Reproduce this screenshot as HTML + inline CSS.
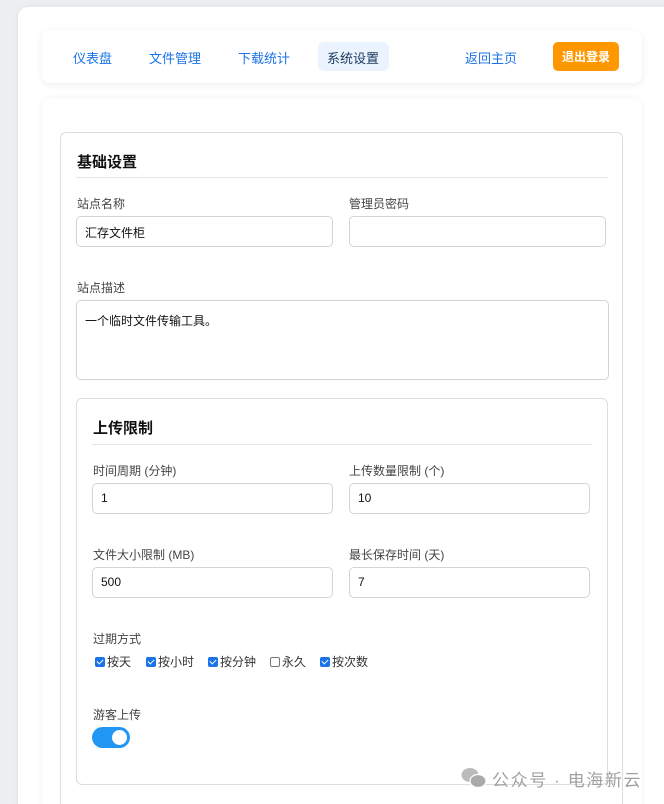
<!DOCTYPE html>
<html style="overflow:hidden;height:804px"><head><meta charset="utf-8"><style>
*{box-sizing:border-box;margin:0;padding:0}
body{width:664px;height:804px;overflow:hidden;background:#eceef2;font-family:"Liberation Sans","Noto Sans CJK SC",sans-serif;position:relative}
.a{position:absolute}
.outer{left:18px;top:7px;width:660px;height:820px;background:#fff;border-radius:10px;box-shadow:0 0 6px rgba(0,0,0,.05)}
.nav{left:42px;top:30px;width:600px;height:53px;background:#fff;border-radius:8px;box-shadow:0 2px 8px rgba(0,0,0,.07)}
.nl{font-size:13px;color:#1a73e8;top:48px}
.main{left:42px;top:98px;width:600px;height:720px;background:#fff;border-radius:8px;box-shadow:0 0 6px rgba(0,0,0,.06)}
.box{border:1px solid #ddd;border-radius:6px;background:#fff}
h3{position:absolute;font-size:15px;font-weight:bold;color:#111}
.hr{height:1px;background:#e6e6e6}
.lb{font-size:12px;color:#444}
.in{border:1px solid #d4d4d4;border-radius:5px;height:31px;font-size:12px;color:#111;padding:7px 0 0 8px;background:#fff}
.cb{display:inline-block;width:10px;height:10px;border-radius:2px;background:#1a73e8;vertical-align:-1px;margin-right:2px;position:relative}
.cb:after{content:"";position:absolute;left:3px;top:1px;width:3px;height:5px;border:solid #fff;border-width:0 1.5px 1.5px 0;transform:rotate(45deg)}
.cb.o{background:#fff;border:1px solid #777}.cb.o:after{display:none}
</style></head><body>
<div class="a outer"></div>
<div class="a nav"></div>
<div class="a nl" style="left:73px">仪表盘</div>
<div class="a nl" style="left:149px">文件管理</div>
<div class="a nl" style="left:238px">下载统计</div>
<div class="a" style="left:318px;top:42px;width:71px;height:29px;background:#eaf3fe;border-radius:6px"></div>
<div class="a nl" style="left:327px;color:#1c3a5e">系统设置</div>
<div class="a nl" style="left:465px">返回主页</div>
<div class="a" style="left:553px;top:42px;width:66px;height:29px;background:#ff9800;border-radius:5px;color:#fff;font-size:12px;font-weight:bold;text-align:center;line-height:30px">退出登录</div>
<div class="a main"></div>
<div class="a box" style="left:60px;top:132px;width:563px;height:700px"></div>
<h3 style="left:77px;top:151px">基础设置</h3>
<div class="a hr" style="left:76px;top:177px;width:532px"></div>
<div class="a lb" style="left:77px;top:195px">站点名称</div>
<div class="a lb" style="left:349px;top:195px">管理员密码</div>
<div class="a in" style="left:76px;top:216px;width:257px">汇存文件柜</div>
<div class="a in" style="left:349px;top:216px;width:257px"></div>
<div class="a lb" style="left:77px;top:279px">站点描述</div>
<div class="a in" style="left:76px;top:300px;width:533px;height:80px;padding-top:11px">一个临时文件传输工具。</div>
<div class="a box" style="left:76px;top:398px;width:532px;height:387px"></div>
<h3 style="left:93px;top:417px">上传限制</h3>
<div class="a hr" style="left:92px;top:444px;width:500px"></div>
<div class="a lb" style="left:93px;top:462px">时间周期 (分钟)</div>
<div class="a lb" style="left:349px;top:462px">上传数量限制 (个)</div>
<div class="a in" style="left:92px;top:483px;width:241px">1</div>
<div class="a in" style="left:349px;top:483px;width:241px">10</div>
<div class="a lb" style="left:93px;top:546px">文件大小限制 (MB)</div>
<div class="a lb" style="left:349px;top:546px">最长保存时间 (天)</div>
<div class="a in" style="left:92px;top:567px;width:241px">500</div>
<div class="a in" style="left:349px;top:567px;width:241px">7</div>
<div class="a lb" style="left:93px;top:630px">过期方式</div>
<div class="a lb" style="left:95px;top:653px;color:#333"><span class="cb"></span>按天</div>
<div class="a lb" style="left:146px;top:653px;color:#333"><span class="cb"></span>按小时</div>
<div class="a lb" style="left:208px;top:653px;color:#333"><span class="cb"></span>按分钟</div>
<div class="a lb" style="left:270px;top:653px;color:#333"><span class="cb o"></span>永久</div>
<div class="a lb" style="left:320px;top:653px;color:#333"><span class="cb"></span>按次数</div>
<div class="a lb" style="left:93px;top:706px">游客上传</div>
<div class="a" style="left:92px;top:727px;width:38px;height:21px;border-radius:11px;background:#2196f3"></div>
<div class="a" style="left:112px;top:730px;width:15px;height:15px;border-radius:50%;background:#fff"></div>
<svg class="a" style="left:461px;top:767px" width="26" height="22" viewBox="0 0 26 22"><ellipse cx="9" cy="8" rx="8.5" ry="7" fill="#bbb"/><ellipse cx="17" cy="14" rx="8" ry="6.5" fill="#aaa" stroke="#fff" stroke-width="1.2"/></svg>
<div class="a" style="left:492px;top:766px;font-size:17px;color:#a0a0a0;letter-spacing:1.6px">公众号 · 电海新云</div>
</body></html>
